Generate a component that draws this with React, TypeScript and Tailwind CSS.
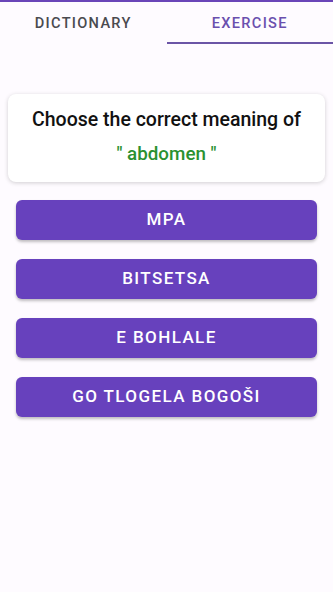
import React from 'react';

const options = ['MPA', 'BITSETSA', 'E BOHLALE', 'GO TLOGELA BOGOŠI'];

const App: React.FC = () => {
  return (
    <div className="min-h-[592px] w-full bg-[#fefbff] font-['Roboto',sans-serif]">
      <div className="h-[2px] bg-[#6a45b8]" />
      {/* tabs */}
      <div className="flex h-[42px]">
        <div className="flex flex-1 items-center justify-center">
          <span className="pt-[2px] text-[14.6px] font-medium tracking-[1.3px] text-[#4a4a4f]">DICTIONARY</span>
        </div>
        <div className="flex flex-1 items-center justify-center border-b-2 border-[#6b55a6]">
          <span className="pt-[4px] text-[14.6px] font-medium tracking-[1.3px] text-[#6a4fae]">EXERCISE</span>
        </div>
      </div>

      <div className="px-2 pt-[50px]">
        <div className="flex h-[88px] flex-col items-center justify-center gap-[10px] rounded-lg bg-white pb-[3px] shadow-[0_1px_4px_rgba(0,0,0,0.18)]">
          <div className="text-[19.5px] font-medium leading-[24px] text-[#111]">Choose the correct meaning of</div>
          <div className="text-[18.8px] font-medium leading-[24px] text-[#2a9130]">" abdomen "</div>
        </div>
      </div>

      <div className="flex flex-col gap-[19px] px-4 pt-[18px]">
        {options.map((o) => (
          <button
            key={o}
            className="flex h-[40px] w-full items-center justify-center rounded-md bg-[#6741bd] text-[17px] font-medium tracking-[1.4px] text-white shadow-[0_2px_3px_rgba(0,0,0,0.25)]"
          >
            {o}
          </button>
        ))}
      </div>
    </div>
  );
};

export default App;
